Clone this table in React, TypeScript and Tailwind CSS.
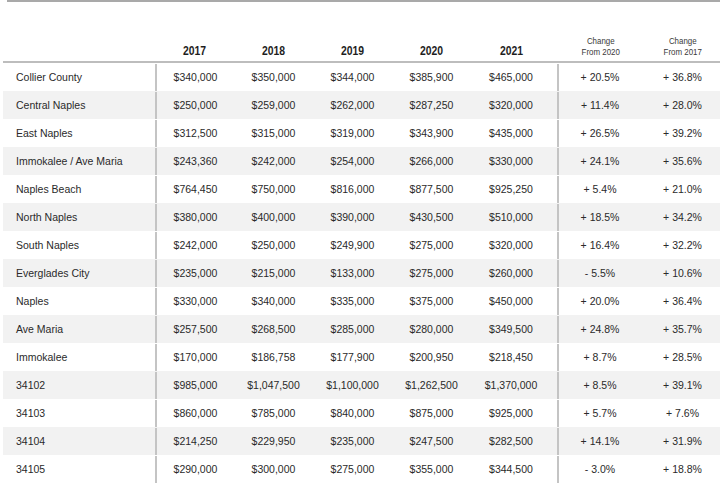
const rows: [string, string, string, string, string, string, string, string][] = [
  ['Collier County', '$340,000', '$350,000', '$344,000', '$385,900', '$465,000', '+ 20.5%', '+ 36.8%'],
  ['Central Naples', '$250,000', '$259,000', '$262,000', '$287,250', '$320,000', '+ 11.4%', '+ 28.0%'],
  ['East Naples', '$312,500', '$315,000', '$319,000', '$343,900', '$435,000', '+ 26.5%', '+ 39.2%'],
  ['Immokalee / Ave Maria', '$243,360', '$242,000', '$254,000', '$266,000', '$330,000', '+ 24.1%', '+ 35.6%'],
  ['Naples Beach', '$764,450', '$750,000', '$816,000', '$877,500', '$925,250', '+ 5.4%', '+ 21.0%'],
  ['North Naples', '$380,000', '$400,000', '$390,000', '$430,500', '$510,000', '+ 18.5%', '+ 34.2%'],
  ['South Naples', '$242,000', '$250,000', '$249,900', '$275,000', '$320,000', '+ 16.4%', '+ 32.2%'],
  ['Everglades City', '$235,000', '$215,000', '$133,000', '$275,000', '$260,000', '- 5.5%', '+ 10.6%'],
  ['Naples', '$330,000', '$340,000', '$335,000', '$375,000', '$450,000', '+ 20.0%', '+ 36.4%'],
  ['Ave Maria', '$257,500', '$268,500', '$285,000', '$280,000', '$349,500', '+ 24.8%', '+ 35.7%'],
  ['Immokalee', '$170,000', '$186,758', '$177,900', '$200,950', '$218,450', '+ 8.7%', '+ 28.5%'],
  ['34102', '$985,000', '$1,047,500', '$1,100,000', '$1,262,500', '$1,370,000', '+ 8.5%', '+ 39.1%'],
  ['34103', '$860,000', '$785,000', '$840,000', '$875,000', '$925,000', '+ 5.7%', '+ 7.6%'],
  ['34104', '$214,250', '$229,950', '$235,000', '$247,500', '$282,500', '+ 14.1%', '+ 31.9%'],
  ['34105', '$290,000', '$300,000', '$275,000', '$355,000', '$344,500', '- 3.0%', '+ 18.8%'],
];

const cols = 'grid grid-cols-[152px_79px_79px_79px_79px_86px_88px_75px]';

const Year = ({ y, extra = '' }: { y: string; extra?: string }) => (
  <div className={`flex items-end justify-center pb-[1px] ${extra}`}>
    <span className="inline-block scale-x-[0.8] text-[13px] font-bold text-[#1e1e1e]">{y}</span>
  </div>
);

const Change = ({ y }: { y: string }) => (
  <div className="flex flex-col items-center justify-end pb-[3px] text-[9px] leading-[11px] text-[#3a3a3a]">
    <span className="inline-block scale-x-[0.88]">Change</span>
    <span className="inline-block scale-x-[0.88]">From {y}</span>
  </div>
);

export default function App() {
  return (
    <div className="h-[483px] w-[722px] overflow-hidden bg-white text-[#2a2a2a] font-['Liberation_Sans',Arial,sans-serif]">
      <div className="ml-[7px] h-[2px] w-[713px] bg-[#a9a9a9]" />
      <div className={`${cols} ml-[3px] h-[61px] w-[717px] border-b-2 border-[#bdbdbd]`}>
        <div />
        <Year y="2017" />
        <Year y="2018" />
        <Year y="2019" />
        <Year y="2020" />
        <Year y="2021" extra="pr-[6px]" />
        <Change y="2020" />
        <Change y="2017" />
      </div>
      {rows.map((r, i) => (
        <div
          key={r[0]}
          className={`${cols} ml-[3px] h-[28px] w-[717px] items-center pt-[1px] text-[10.5px] ${i % 2 === 1 ? 'bg-[#f2f2f2]' : 'bg-white'}`}
        >
          <div className="pl-[13px]">{r[0]}</div>
          <div className="flex h-full items-center justify-center border-l-2 border-[#c4c4c4]">{r[1]}</div>
          <div className="text-center">{r[2]}</div>
          <div className="text-center">{r[3]}</div>
          <div className="text-center">{r[4]}</div>
          <div className="pr-[6px] text-center">{r[5]}</div>
          <div className="flex h-full items-center justify-center border-l-2 border-[#c4c4c4] pr-[4px]">{r[6]}</div>
          <div className="text-center">{r[7]}</div>
        </div>
      ))}
    </div>
  );
}
